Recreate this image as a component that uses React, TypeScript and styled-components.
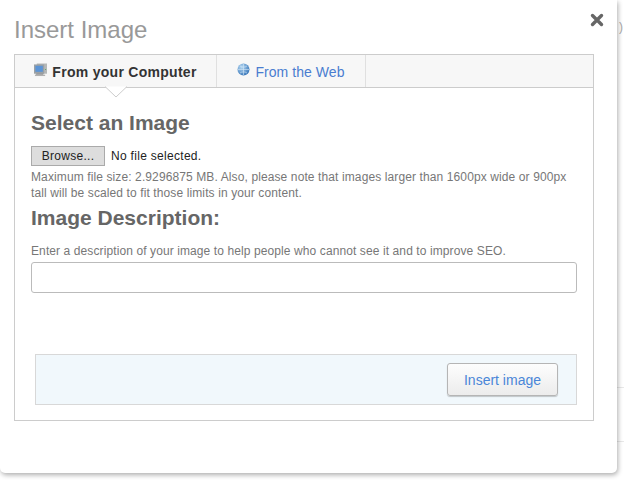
import React from "react";
import styled, { createGlobalStyle } from "styled-components";

const Global = createGlobalStyle`
  html, body { margin: 0; padding: 0; background: #fff; overflow: hidden; }
  body { font-family: "Liberation Sans", Arial, sans-serif; }
`;
const Page = styled.div`
  display: flex;
  width: 624px;
  height: 483px;
  overflow: hidden;
`;
const Modal = styled.div`
  position: relative;
  z-index: 1;
  flex: none;
  box-sizing: border-box;
  width: 617px;
  height: 473px;
  padding: 16px 23px 0 14px;
  background: #fff;
  border-radius: 0 0 5px 5px;
  box-shadow: 1px 2px 5px rgba(0, 0, 0, 0.32);
`;
const Backdrop = styled.div`
  flex: 1;
  display: flex;
  flex-direction: column;
  padding-top: 19px;
  min-width: 0;
`;
const Paren = styled.span`
  height: 16px;
  margin-left: 2px;
  font-size: 12px;
  line-height: 16px;
  color: #aaa;
`;
const BackLine = styled.div<{ $top: number }>`
  margin-top: ${(p) => p.$top}px;
  height: 1px;
  background: #e8e8e8;
`;
const Title = styled.h1`
  margin: 0 0 10px;
  height: 28px;
  font-size: 24px;
  line-height: 28px;
  font-weight: 400;
  color: #999;
`;
const Close = styled.button`
  position: absolute;
  top: 13px;
  right: 13px;
  width: 14px;
  height: 14px;
  padding: 0;
  border: 0;
  background: none;
  display: flex;
`;
const Panel = styled.div`
  box-sizing: border-box;
  width: 580px;
  height: 367px;
  border: 1px solid #ccc;
`;
const Tabs = styled.div`
  display: flex;
  height: 32px;
  background: #f7f7f7;
  border-bottom: 1px solid #ccc;
`;
const Tab = styled.div<{ $active?: boolean; $w: number }>`
  position: relative;
  box-sizing: border-box;
  width: ${(p) => p.$w}px;
  display: flex;
  align-items: center;
  justify-content: center;
  gap: 5px;
  padding-top: 2px;
  font-size: 14px;
  letter-spacing: ${(p) => (p.$active ? "0.28px" : "0.05px")};
  font-weight: ${(p) => (p.$active ? 700 : 400)};
  color: ${(p) => (p.$active ? "#333" : "#4a7dd0")};
  border-right: 1px solid #e0e0e0;
  > svg:first-child { margin-top: -5px; }
`;
const NotchSvg = styled.svg`
  position: absolute;
  left: 89px;
  top: 31px;
`;
const Body = styled.div`
  padding: 22px 16px 0;
`;
const Heading = styled.h2`
  margin: 0;
  font-size: 21px;
  line-height: 26px;
  font-weight: 700;
  color: #666;
`;
const SecondHeading = styled(Heading)`
  margin-top: 4px;
`;
const FileRow = styled.div`
  display: flex;
  align-items: center;
  gap: 6px;
  margin-top: 10px;
  height: 20px;
  font-size: 12px;
  letter-spacing: 0.3px;
  color: #222;
`;
const Browse = styled.button`
  box-sizing: border-box;
  width: 74px;
  height: 20px;
  padding: 0;
  background: #ddd;
  border: 1px solid #aaa;
  font: 12px "Liberation Sans", Arial, sans-serif;
  letter-spacing: 0.3px;
  color: #222;
`;
const Hint = styled.p`
  margin: 3px 0 0;
  font-size: 12px;
  line-height: 16px;
  letter-spacing: 0.11px;
  color: #777;
`;
const Desc = styled(Hint)`
  margin-top: 12px;
  letter-spacing: 0.1px;
`;
const Input = styled.input`
  display: block;
  box-sizing: border-box;
  width: 546px;
  height: 31px;
  margin-top: 3px;
  border: 1px solid #bbb;
  border-radius: 3px;
  background: #fff;
`;
const Footer = styled.div`
  box-sizing: border-box;
  display: flex;
  justify-content: flex-end;
  align-items: flex-start;
  width: 542px;
  height: 51px;
  margin: 61px 0 0 4px;
  padding: 8px 18px 0 0;
  background: #f1f8fc;
  border: 1px solid #d8d8d8;
`;
const Insert = styled.button`
  box-sizing: border-box;
  width: 111px;
  height: 33px;
  padding: 0;
  border: 1px solid #b5b5b5;
  border-radius: 3px;
  background: linear-gradient(#fdfdfd, #ececec);
  box-shadow: 0 1px 1px rgba(0, 0, 0, 0.2);
  font: 14px "Liberation Sans", Arial, sans-serif;
  color: #4a86d8;
`;

const ComputerIcon = () => (
  <svg width="13" height="14" viewBox="0 0 14 14">
    <rect x="3" y="0" width="11" height="11" fill="#b5b8b8" />
    <rect x="0" y="1" width="11" height="10" fill="#9aa0a5" />
    <rect x="1.5" y="2.5" width="8" height="6.5" fill="#5b94d6" />
    <rect x="2" y="11" width="8" height="1" fill="#777" />
    <rect x="1" y="12" width="11" height="1.5" fill="#b0b0b0" />
    <rect x="12" y="6" width="1" height="1" fill="#5a5" />
  </svg>
);
const GlobeIcon = () => (
  <svg width="13" height="13" viewBox="0 0 13 13">
    <defs>
      <radialGradient id="g" cx="0.35" cy="0.3" r="0.8">
        <stop offset="0" stopColor="#b5d8f2" />
        <stop offset="1" stopColor="#2f6fb5" />
      </radialGradient>
    </defs>
    <circle cx="6.5" cy="6.5" r="6" fill="url(#g)" />
    <path d="M1 6.5h11M6.5 1v11M3 3c2 1.5 5 1.5 7 0M3 10c2-1.5 5-1.5 7 0" stroke="#d5e8f7" strokeWidth="0.6" fill="none" />
  </svg>
);
const CloseIcon = () => (
  <svg width="14" height="14" viewBox="0 0 14 14">
    <path d="M2.5 2.5l9 9M11.5 2.5l-9 9" stroke="#666" strokeWidth="3.4" strokeLinecap="round" />
  </svg>
);
const Notch = () => (
  <NotchSvg width="24" height="12" viewBox="0 0 24 12">
    <path d="M1 0.5L12 11L23 0.5" fill="#fff" stroke="#ccc" strokeWidth="1" />
  </NotchSvg>
);

export default function App() {
  return (
    <Page>
      <Global />
      <Modal>
        <Close aria-label="Close"><CloseIcon /></Close>
        <Title>Insert Image</Title>
        <Panel>
          <Tabs>
            <Tab $active $w={202}><ComputerIcon />From your Computer<Notch /></Tab>
            <Tab $w={149}><GlobeIcon />From the Web</Tab>
          </Tabs>
          <Body>
            <Heading>Select an Image</Heading>
            <FileRow><Browse>Browse...</Browse>No file selected.</FileRow>
            <Hint>Maximum file size: 2.9296875 MB. Also, please note that images larger than 1600px wide or 900px tall will be scaled to fit those limits in your content.</Hint>
            <SecondHeading>Image Description:</SecondHeading>
            <Desc>Enter a description of your image to help people who cannot see it and to improve SEO.</Desc>
            <Input />
            <Footer><Insert>Insert image</Insert></Footer>
          </Body>
        </Panel>
      </Modal>
      <Backdrop>
        <Paren>)</Paren>
        <BackLine $top={352} />
        <BackLine $top={53} />
      </Backdrop>
    </Page>
  );
}
